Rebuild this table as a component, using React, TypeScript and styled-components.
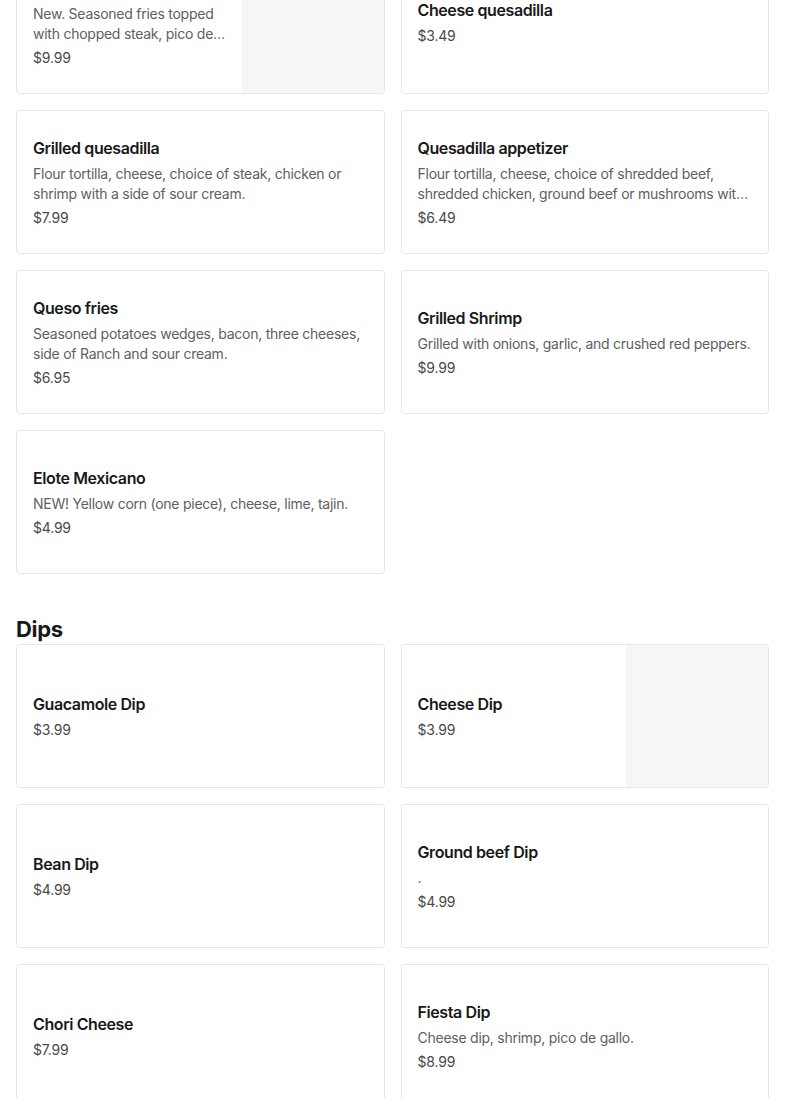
import React from 'react'
import styled, { createGlobalStyle } from 'styled-components'

type Item = {
  name: string
  description?: string
  price: string
  image?: boolean
}

const APPETIZERS: Item[] = [
  {
    name: 'Carne asada fries',
    description: 'New. Seasoned fries topped with chopped steak, pico de gallo, sour cream and cheese.',
    price: '$9.99',
    image: true,
  },
  { name: 'Cheese quesadilla', price: '$3.49' },
  {
    name: 'Grilled quesadilla',
    description: 'Flour tortilla, cheese, choice of steak, chicken or shrimp with a side of sour cream.',
    price: '$7.99',
  },
  {
    name: 'Quesadilla appetizer',
    description:
      'Flour tortilla, cheese, choice of shredded beef, shredded chicken, ground beef or mushrooms with a side of sour cream.',
    price: '$6.49',
  },
  {
    name: 'Queso fries',
    description: 'Seasoned potatoes wedges, bacon, three cheeses, side of Ranch and sour cream.',
    price: '$6.95',
  },
  {
    name: 'Grilled Shrimp',
    description: 'Grilled with onions, garlic, and crushed red peppers.',
    price: '$9.99',
  },
  {
    name: 'Elote Mexicano',
    description: 'NEW! Yellow corn (one piece), cheese, lime, tajin.',
    price: '$4.99',
  },
]

const DIPS: Item[] = [
  { name: 'Guacamole Dip', price: '$3.99' },
  { name: 'Cheese Dip', price: '$3.99', image: true },
  { name: 'Bean Dip', price: '$4.99' },
  { name: 'Ground beef Dip', description: '.', price: '$4.99' },
  { name: 'Chori Cheese', price: '$7.99' },
  { name: 'Fiesta Dip', description: 'Cheese dip, shrimp, pico de gallo.', price: '$8.99' },
]

const GlobalStyle = createGlobalStyle`
  body {
    margin: 0;
    background: #ffffff;
    font-family: Inter, "Noto Sans", sans-serif;
    -webkit-font-smoothing: antialiased;
  }
`

const MenuCard = ({ item }: { item: Item }) => (
  <Card>
    <CardBody>
      <Title>{item.name}</Title>
      {item.description && <Description>{item.description}</Description>}
      <Price>{item.price}</Price>
    </CardBody>
    {item.image && <ImageSlot />}
  </Card>
)

export default function App() {
  return (
    <>
      <GlobalStyle />
      <Page>
        <Section>
          <Grid>
            {APPETIZERS.map((item) => (
              <MenuCard key={item.name} item={item} />
            ))}
          </Grid>
        </Section>
        <Section>
          <SectionTitle>Dips</SectionTitle>
          <Grid>
            {DIPS.map((item) => (
              <MenuCard key={item.name} item={item} />
            ))}
          </Grid>
        </Section>
      </Page>
    </>
  )
}

// the view is scrolled: the first row of cards starts above the fold
const Page = styled.div`
  margin-top: -50px;
  padding: 0 16px 40px;
  display: flex;
  flex-direction: column;
  gap: 40px;
`

const Section = styled.section`
  display: flex;
  flex-direction: column;
`

const SectionTitle = styled.h2`
  margin: 0;
  height: 30px;
  font-size: 22px;
  line-height: 30px;
  font-weight: 700;
  color: #191919;
  letter-spacing: -0.3px;
`

const Grid = styled.div`
  display: grid;
  grid-template-columns: 1fr 1fr;
  gap: 16px;
`

const Card = styled.div`
  display: flex;
  height: 144px;
  box-sizing: border-box;
  border: 1px solid #e7e7e7;
  border-radius: 4px;
  overflow: hidden;
  background: #ffffff;
`

const CardBody = styled.div`
  flex: 1 1 auto;
  min-width: 0;
  padding: 0 16px;
  display: flex;
  flex-direction: column;
  justify-content: center;
  gap: 4px;
`

const Title = styled.div`
  font-size: 16px;
  line-height: 24px;
  font-weight: 600;
  color: #191919;
  letter-spacing: -0.4px;
  white-space: nowrap;
  overflow: hidden;
  text-overflow: ellipsis;
`

const Description = styled.div`
  font-size: 14px;
  line-height: 20px;
  color: #606060;
  letter-spacing: -0.25px;
  display: -webkit-box;
  -webkit-line-clamp: 2;
  -webkit-box-orient: vertical;
  overflow: hidden;
`

const Price = styled.div`
  font-size: 14px;
  line-height: 20px;
  color: #494949;
  letter-spacing: -0.2px;
`

const ImageSlot = styled.div`
  flex: 0 0 142px;
  background: #f6f6f6;
`
